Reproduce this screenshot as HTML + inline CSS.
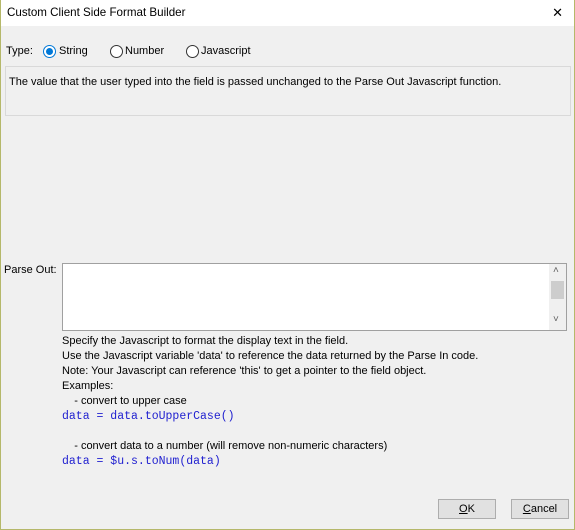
<!DOCTYPE html>
<html><head><style>
*{margin:0;padding:0;box-sizing:border-box}
body{width:575px;height:530px;overflow:hidden;background:#f0f0f0;font-family:"Liberation Sans",sans-serif;font-size:11px;color:#000;position:relative}
.frame{position:absolute;left:0;top:0;width:575px;height:530px;border:1px solid #b5b86a;border-top:none}
.title{position:absolute;left:1px;top:0;width:573px;height:26px;background:#fff}
.title span{position:absolute;left:6px;top:6px;font-size:11.6px}
.close{position:absolute;right:11px;top:5px;font-size:13px;font-weight:300}
.a{position:absolute;white-space:nowrap}
.radio{position:absolute;width:13px;height:13px;border:1px solid #333;border-radius:50%;background:#fff}
.radio.on{border-color:#0078d7}
.radio.on:after{content:"";position:absolute;left:2px;top:2px;width:7px;height:7px;border-radius:50%;background:#0078d7}
.desc{position:absolute;left:5px;top:66px;width:566px;height:50px;border:1px solid #d9d9d9}
.ta{position:absolute;left:62px;top:263px;width:505px;height:68px;border:1px solid #a0a0a0;background:#fff}
.sb{position:absolute;right:0;top:0;width:17px;height:66px;background:#f0f0f0}
.thumb{position:absolute;left:2px;top:17px;width:13px;height:18px;background:#cdcdcd}
.code{font-family:"Liberation Mono",monospace;color:#2020d0;font-size:11.5px}
.btn{position:absolute;top:499px;width:58px;height:20px;border:1px solid #adadad;background:#e1e1e1;text-align:center;line-height:18px}
</style></head><body>
<div class="title"><span>Custom Client Side Format Builder</span><div class="close">✕</div></div>
<div class="a" style="left:6px;top:45px">Type:</div>
<div class="radio on" style="left:43px;top:45px"></div><div class="a" style="left:59px;top:45px">String</div>
<div class="radio" style="left:110px;top:45px"></div><div class="a" style="left:125px;top:45px">Number</div>
<div class="radio" style="left:186px;top:45px"></div><div class="a" style="left:201px;top:45px">Javascript</div>
<div class="desc"></div>
<div class="a" style="left:9px;top:76px">The value that the user typed into the field is passed unchanged to the Parse Out Javascript function.</div>
<div class="a" style="left:4px;top:264px">Parse Out:</div>
<div class="ta"><div class="sb"><div class="a" style="left:4px;top:1px;font-size:10px;color:#606060">˄</div><div class="thumb"></div><div class="a" style="left:4px;top:50px;font-size:10px;color:#606060">˅</div></div></div>
<div class="a" style="left:62px;top:334px;line-height:15px">Specify the Javascript to format the display text in the field.<br>Use the Javascript variable 'data' to reference the data returned by the Parse In code.<br>Note: Your Javascript can reference 'this' to get a pointer to the field object.<br>Examples:<br>&nbsp;&nbsp;&nbsp;&nbsp;- convert to upper case<br><span class="code">data = data.toUpperCase()</span><br><br>&nbsp;&nbsp;&nbsp;&nbsp;- convert data to a number (will remove non-numeric characters)<br><span class="code">data = $u.s.toNum(data)</span></div>
<div class="btn" style="left:438px"><u>O</u>K</div>
<div class="btn" style="left:511px"><u>C</u>ancel</div>
<div class="frame"></div>
</body></html>
